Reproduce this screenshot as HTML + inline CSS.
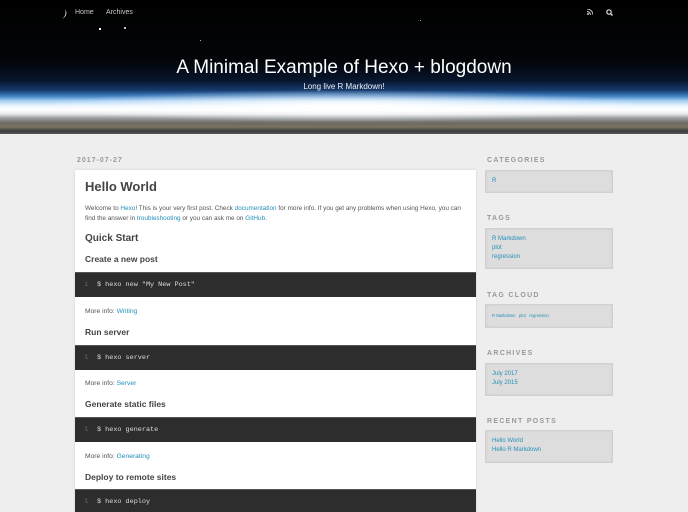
<!DOCTYPE html>
<html><head><meta charset="utf-8"><style>
*{margin:0;padding:0;box-sizing:border-box}
html,body{width:688px;height:512px;overflow:hidden}
body{background:#eee;font-family:"Liberation Sans",sans-serif;position:relative;color:#555}
.a{position:absolute}
#banner{left:0;top:0;width:688px;height:134px;background:
radial-gradient(ellipse 300px 16px at 344px 106px,rgba(255,255,255,1),rgba(255,255,255,0) 100%),
linear-gradient(to bottom,#000 0,#030508 60px,#07142a 80px,#15396b 90px,#3f7fc0 96px,#a9d2f5 101px,#eef7ff 106px,#fff 110px,#e6e8ea 114px,#9aa0a4 118px,#6d6a60 123px,#7a7263 127px,#3c3d3d 131px,#555 134px)}
.nav{color:#ccc;font-size:7px;top:9px}
.title{top:57px;width:688px;text-align:center;color:#fff;font-size:19px;font-weight:300}
.sub{top:82px;width:688px;text-align:center;color:#eee;font-size:8px}
.date{left:77px;top:157px;font-size:7px;letter-spacing:1px;color:#999;font-weight:bold}
#art{left:75px;top:170px;width:401px;height:342px;background:#fff;box-shadow:0 0 2px #ccc}
h1{position:absolute;left:10px;font-size:13px;color:#444;font-weight:bold}
h2{position:absolute;left:10px;font-size:10px;color:#444;font-weight:bold}
h3{position:absolute;left:10px;font-size:8.5px;color:#444;font-weight:bold}
p{position:absolute;left:10px;font-size:6.7px;line-height:10px;color:#555;width:390px;white-space:nowrap}
a{color:#258fb8;text-decoration:none}
.code{position:absolute;left:0;width:401px;height:25px;background:#2d2d2d;color:#ddd;font-family:"Liberation Mono",monospace;font-size:6.8px;line-height:25px;padding-left:22px;border-top:1px solid #555}
.code i{font-style:normal;color:#666;position:absolute;left:9px}
.wt{left:487px;font-size:7px;font-weight:bold;letter-spacing:1.3px;color:#999}
.wb{left:485px;width:128px;background:#ddd;border:1px solid #d0d0d0;box-shadow:inset 0 0 2px #ccc;padding:6px 6px;font-size:6px;line-height:9px}
</style></head><body>
<div id="banner" class="a"></div>
<div class="a" style="left:99px;top:28px;width:1.5px;height:1.5px;background:#fff"></div>
<div class="a" style="left:124px;top:27px;width:2px;height:2px;background:#fff;border-radius:50%"></div>
<div class="a" style="left:200px;top:40px;width:1px;height:1px;background:#aaa"></div>
<div class="a" style="left:420px;top:20px;width:1px;height:1px;background:#aaa"></div>
<div class="a" style="left:500px;top:60px;width:1px;height:1px;background:#999"></div>
<svg class="a" style="left:60px;top:8px" width="10" height="12"><path d="M5 1 Q9 7 2 11 Q7 7 5 1Z" fill="#ddd"/></svg>
<div class="a nav" style="left:75px">Home</div>
<div class="a nav" style="left:106px">Archives</div>
<svg class="a" style="left:587px;top:9px" width="6" height="6"><circle cx="1" cy="5" r="1" fill="#ccc"/><path d="M0 2.5a3.5 3.5 0 0 1 3.5 3.5M0 0a6 6 0 0 1 6 6" stroke="#ccc" fill="none" stroke-width="1"/></svg>
<svg class="a" style="left:606px;top:9px" width="7" height="7"><circle cx="3" cy="3" r="2.2" stroke="#ddd" fill="none" stroke-width="1.2"/><path d="M4.6 4.6L6.5 6.5" stroke="#ddd" stroke-width="1.4"/></svg>
<div class="a title">A Minimal Example of Hexo + blogdown</div>
<div class="a sub">Long live R Markdown!</div>

<div class="a date">2017-07-27</div>
<div id="art" class="a">
<h1 style="top:9px">Hello World</h1>
<p style="top:34px;font-size:6.4px">Welcome to <a>Hexo</a>! This is your very first post. Check <a>documentation</a> for more info. If you get any problems when using Hexo, you can<br>find the answer in <a>troubleshooting</a> or you can ask me on <a>GitHub</a>.</p>
<h2 style="top:63px">Quick Start</h2>
<h3 style="top:84px">Create a new post</h3>
<div class="code" style="top:102px"><i>1</i>$ hexo new "My New Post"</div>
<p style="top:137px">More info: <a>Writing</a></p>
<h3 style="top:157px">Run server</h3>
<div class="code" style="top:175px"><i>1</i>$ hexo server</div>
<p style="top:209px">More info: <a>Server</a></p>
<h3 style="top:229px">Generate static files</h3>
<div class="code" style="top:247px"><i>1</i>$ hexo generate</div>
<p style="top:282px">More info: <a>Generating</a></p>
<h3 style="top:302px">Deploy to remote sites</h3>
<div class="code" style="top:319px"><i>1</i>$ hexo deploy</div>
</div>

<div class="a wt" style="top:157px">CATEGORIES</div>
<div class="a wb" style="top:170px;height:23px"><a>R</a></div>
<div class="a wt" style="top:215px">TAGS</div>
<div class="a wb" style="top:228px;height:41px"><a>R Markdown</a><br><a>plot</a><br><a>regression</a></div>
<div class="a wt" style="top:292px">TAG CLOUD</div>
<div class="a wb" style="top:304px;height:24px;font-size:4.2px;line-height:10px"><a>R Markdown</a> &nbsp; <a>plot</a> &nbsp; <a>regression</a></div>
<div class="a wt" style="top:350px">ARCHIVES</div>
<div class="a wb" style="top:363px;height:33px"><a>July 2017</a><br><a>July 2015</a></div>
<div class="a wt" style="top:418px">RECENT POSTS</div>
<div class="a wb" style="top:430px;height:33px"><a>Hello World</a><br><a>Hello R Markdown</a></div>
</body></html>
